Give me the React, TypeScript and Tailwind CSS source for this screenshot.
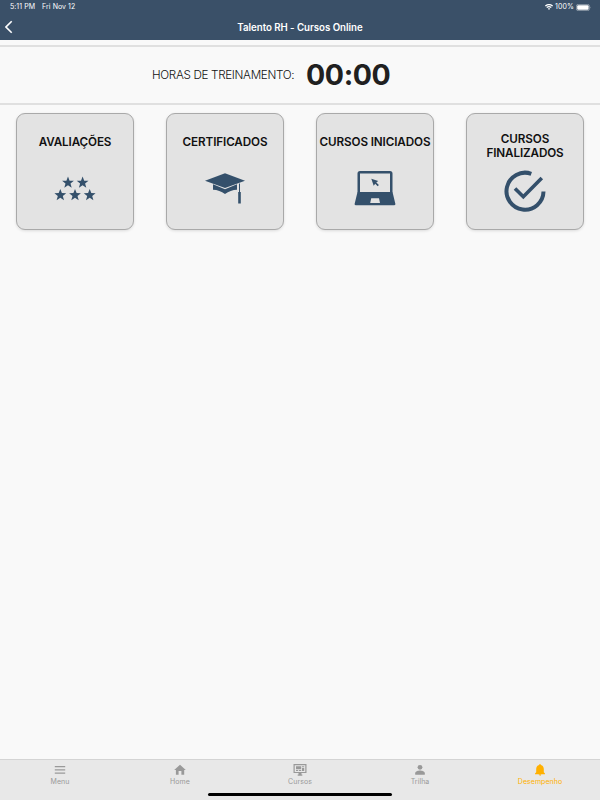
import React from "react";

const cardBase =
  "flex h-[117px] w-[118px] flex-col items-center rounded-[9px] border border-[#a9a9a9] bg-[#e3e3e3] shadow-[0_1px_3px_rgba(0,0,0,0.12)]";

const starPath =
  "M0 -6 L1.6 -1.9 L5.9 -1.8 L2.5 0.9 L3.7 5.2 L0 2.7 L-3.7 5.2 L-2.5 0.9 L-5.9 -1.8 L-1.6 -1.9 Z";

function Stars() {
  const spots = [[14, 12.6], [28.6, 12.6], [6.3, 25], [21, 25], [35.7, 25]];
  return (
    <svg width="42" height="42" viewBox="0 0 42 42" fill="#34506b">
      {spots.map(([x, y]) => (
        <path key={`${x}-${y}`} d={starPath} transform={`translate(${x} ${y})`} />
      ))}
    </svg>
  );
}

function Cap() {
  return (
    <svg width="42" height="42" viewBox="0 0 42 42" fill="#34506b">
      <path d="M21 3.3 L41 10.800 L21 18 L1 10.800 Z" />
      <path d="M9 14.300 L21 19.200 L33 14.300 V19.800 Q26.500 20 21 24 Q15.500 20 9 19.800 Z" />
      <path d="M35 13.500 h1 v8.500 h0.800 v11.500 h-2.600 v-11.500 h0.800 Z" />
    </svg>
  );
}

function Laptop() {
  return (
    <svg width="42" height="42" viewBox="0 0 42 42">
      <path
        fill="#34506b"
        fillRule="evenodd"
        d="M6 1 H36 Q38.500 1 38.500 3.500 V22.500 H3.500 V3.500 Q3.500 1 6 1 Z M6 3.500 V22.500 H36 V3.500 Z"
      />
      <path
        fill="#34506b"
        fillRule="evenodd"
        d="M3.500 22 H38.500 L41.400 34 Q41.500 35.300 40 35.300 H2 Q0.500 35.300 0.600 34 Z M17.200 28.200 L16.200 33 H26 L25 28.200 Z"
      />
      <path
        fill="#34506b"
        d="M17.300 8.800 L24.200 11 L22.300 12.500 L24.900 15 L23.700 16.300 L21.200 13.800 L19.700 15.800 Z"
      />
    </svg>
  );
}

function Check() {
  return (
    <svg width="42" height="42" viewBox="0 0 42 42" fill="none" stroke="#34506b">
      <path strokeWidth="4" d="M27.300 3.800 A18.500 18.500 0 1 0 39.500 21.500" />
      <path strokeWidth="3.600" d="M11 18.500 L19.300 26.800 L37.800 8" />
    </svg>
  );
}

function Card({ lines, children }: { lines: string[]; children: React.ReactNode }) {
  return (
    <div className="flex w-[150px] justify-center">
      <div className={cardBase}>
        <div className="flex h-[56px] flex-col items-center pt-[18px]">
          <div
            className={`flex flex-col items-center text-[11.7px] leading-[14px] font-semibold tracking-[-0.12px] whitespace-nowrap text-[#111111] ${
              lines.length === 1 ? "pt-[3px]" : ""
            }`}
          >
            {lines.map((line) => (
              <span key={line}>{line}</span>
            ))}
          </div>
        </div>
        {children}
      </div>
    </div>
  );
}

function Tab({ label, active, children }: { label: string; active?: boolean; children: React.ReactNode }) {
  return (
    <div className={`flex w-[120px] flex-col items-center ${active ? "text-[#ffb000]" : "text-[#999999]"}`}>
      <svg className="mt-[3px]" width="14" height="14" viewBox="0 0 14 14" fill="currentColor">
        {children}
      </svg>
      <span className="mt-px text-[7px] leading-[8px] tracking-[0.05px]">{label}</span>
    </div>
  );
}

export default function App() {
  return (
    <div className="flex h-[800px] w-[600px] flex-col overflow-hidden bg-[#f9f9f9] font-['Inter','Liberation_Sans',sans-serif]">
      <header className="h-[40px] shrink-0 bg-[#3a5068] text-white">
        <div className="flex h-[14px] items-center justify-between pr-[9px] pl-[10px] text-[7px] leading-[14px]">
          <div className="flex gap-[7px] tracking-[0.05px]">
            <span>5:11 PM</span>
            <span>Fri Nov 12</span>
          </div>
          <div className="flex items-center gap-[2px]">
            <svg width="8" height="6" viewBox="0 0 8 6" fill="none" stroke="white" strokeWidth="1.3">
              <path d="M0.400 2.100 Q4 -1 7.600 2.100 M1.700 3.500 Q4 1.600 6.300 3.500" />
              <path d="M4 6 L2.800 4.600 Q4 3.800 5.200 4.600 Z" fill="white" stroke="none" />
            </svg>
            <span className="tracking-[0.1px]">100%</span>
            <svg width="15" height="7" viewBox="0 0 15 7">
              <rect x="0.400" y="0.400" width="13" height="6.200" rx="1.700" fill="none" stroke="#a8b1bc" strokeWidth="0.700" />
              <rect x="1.200" y="1.200" width="11.400" height="4.600" rx="1" fill="white" />
              <path d="M14 2.500 Q15 3.500 14 4.500 Z" fill="#a8b1bc" />
            </svg>
          </div>
        </div>
        <div className="grid h-[26px] grid-cols-[40px_1fr_40px] items-center">
          <svg className="ml-[5px]" width="9" height="14" viewBox="0 0 9 14" fill="none" stroke="white" strokeWidth="1.600">
            <path d="M6.700 1.300 L1 7 L6.700 12.700" />
          </svg>
          <h1 className="pt-[2px] text-center text-[9.7px] leading-[14px] font-semibold tracking-[-0.03px]">
            Talento RH - Cursos Online
          </h1>
        </div>
      </header>

      <section className="mt-[5px] flex h-[60px] shrink-0 items-center border-y-2 border-[#e0e0e0] pt-px pl-[152px] whitespace-nowrap">
        <span className="w-[154px] text-[11.7px] font-light tracking-[-0.340px] text-[#111111]">
          HORAS DE TREINAMENTO:
        </span>
        <span className="pb-[2px] text-[28.500px] leading-[34px] font-bold tracking-[-0.400px] text-[#202020]">00:00</span>
      </section>

      <main className="mt-[8px] flex flex-1">
        <Card lines={["AVALIAÇÕES"]}><Stars /></Card>
        <Card lines={["CERTIFICADOS"]}><Cap /></Card>
        <Card lines={["CURSOS INICIADOS"]}><Laptop /></Card>
        <Card lines={["CURSOS", "FINALIZADOS"]}><Check /></Card>
      </main>

      <footer className="flex h-[41px] shrink-0 flex-col border-t border-[#d4d4d4] bg-[#e8e8e8]">
        <nav className="flex h-[33px]">
          <Tab label="Menu">
            <path d="M1.800 3 h10.400 v1.200 h-10.400 Z M1.800 6.300 h10.400 v1.200 h-10.400 Z M1.800 9.600 h10.400 v1.200 h-10.400 Z" />
          </Tab>
          <Tab label="Home">
            <path d="M5.600 11.700 V8 H8.400 V11.700 H11.200 V7 H12.800 L7 1.700 L1.200 7 H2.900 V11.700 Z" />
          </Tab>
          <Tab label="Cursos">
            <path fillRule="evenodd" d="M0.500 1 H13.500 V10 H8.500 V11.500 H9.300 V12.700 H4.700 V11.500 H5.500 V10 H0.500 Z M1.700 2.200 V8.900 H12.300 V2.200 Z" />
            <path d="M3 3.200 h5.200 v3 h-5.200 Z M9 3.200 h2.200 v1 h-2.200 Z M9 5 h2.200 v3 h-2.200 Z M3 7 h2.200 v1 h-2.200 Z M6 7 h2.200 v1 h-2.200 Z" />
          </Tab>
          <Tab label="Trilha">
            <circle cx="7" cy="4.300" r="2.400" />
            <path d="M2.200 11.800 V10.300 C2.200 8.300 5.300 7.500 7 7.500 C8.700 7.500 11.800 8.300 11.800 10.300 V11.800 Z" />
          </Tab>
          <Tab label="Desempenho" active>
            <path d="M6.200 2 V1.800 C6.200 0.700 7.800 0.700 7.800 1.800 V2 C9.900 2.400 10.800 4.200 10.800 6 V9.200 L12 10.600 V11.200 H2 V10.600 L3.200 9.200 V6 C3.200 4.200 4.100 2.400 6.200 2 Z M5.800 11.600 H8.200 C8.200 13.200 5.800 13.200 5.800 11.600 Z" />
          </Tab>
        </nav>
        <div className="mx-auto h-[3px] w-[184px] rounded-full bg-black" />
      </footer>
    </div>
  );
}
